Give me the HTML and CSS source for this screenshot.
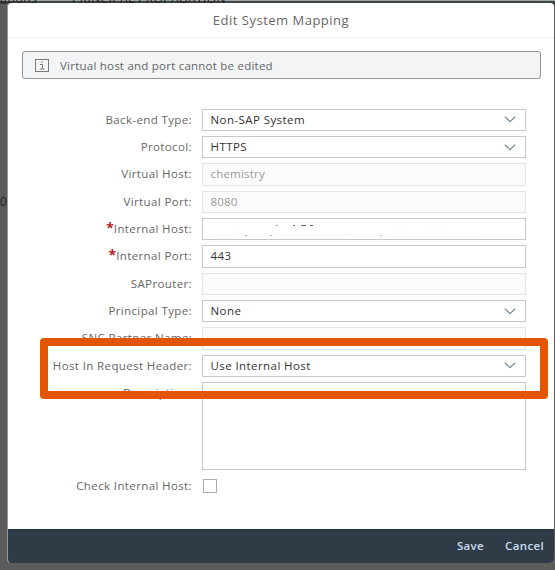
FILE: index.html
```html
<!DOCTYPE html>
<html lang="en">
<head>
<meta charset="utf-8">
<title>Edit System Mapping</title>
<link rel="stylesheet" href="styles.css">
</head>
<body>
<div class="page">
  <div class="backdrop"><span class="tab tab-a">ations</span><span class="tab tab-b">PRINCIPAL PROPAGATION</span><span class="cell">0</span></div>
  <main class="dialog">
    <header class="title"><span class="t-title">Edit System Mapping</span></header>
    <section class="content">
      <div class="strip">
        <svg class="info" viewBox="0 0 14 13"><rect x=".5" y=".5" width="13" height="12"/><path d="M5 5.5h2.5v4.5M4.8 10h4.6M7 2.4v1.6"/></svg>
        <span class="t-strip">Virtual host and port cannot be edited</span>
      </div>
      <form class="form">
        <div class="row"><label>Back-end Type:</label><div class="field"><span>Non-SAP System</span><svg class="arrow" viewBox="0 0 12 7"><path d="M.8.8 6 5.6 11.2.8"/></svg></div></div>
        <div class="row"><label>Protocol:</label><div class="field"><span>HTTPS</span><svg class="arrow" viewBox="0 0 12 7"><path d="M.8.8 6 5.6 11.2.8"/></svg></div></div>
        <div class="row"><label>Virtual Host:</label><div class="field off"><span>chemistry</span></div></div>
        <div class="row"><label>Virtual Port:</label><div class="field off"><span>8080</span></div></div>
        <div class="row"><label><b>*</b>Internal Host:</label><div class="field"><svg class="erased" viewBox="0 0 310 20"><path class="dark" d="M82 6.5h2M90 6.5h5M99 6.5h3"/><path d="M65 6.5h2M34 16.5h2M59 16.5h2M169 16.5h1.5"/><path class="faint" d="M5 16.5h20M65 16.5h75M25 5.5h2M181 7h12M216 7h16M174 17.5h95"/></svg></div></div>
        <div class="row"><label><b>*</b>Internal Port:</label><div class="field"><span>443</span></div></div>
        <div class="row"><label>SAProuter:</label><div class="field off"></div></div>
        <div class="row"><label>Principal Type:</label><div class="field"><span>None</span><svg class="arrow" viewBox="0 0 12 7"><path d="M.8.8 6 5.6 11.2.8"/></svg></div></div>
        <div class="row"><label>SNC Partner Name:</label><div class="field off"></div></div>
        <div class="row"><label>Host In Request Header:</label><div class="field"><span>Use Internal Host</span><svg class="arrow" viewBox="0 0 12 7"><path d="M.8.8 6 5.6 11.2.8"/></svg></div></div>
        <div class="row tall"><label>Description:</label><div class="field"></div></div>
        <div class="row"><label>Check Internal Host:</label><div class="check"></div></div>
      </form>
    </section>
    <footer class="footer"><span>Save</span><span>Cancel</span></footer>
  </main>
  <div class="highlight"></div>
</div>
</body>
</html>
```

FILE: styles.css
```css
* { box-sizing: border-box; }
body { margin: 0; font-family: "Open Sans", "Noto Sans", sans-serif; }
.page { position: relative; width: 555px; height: 570px; overflow: hidden; padding: 3px 1px 0 7px; background: #5c5c5c; }
.backdrop { position: absolute; inset: 0; font-size: 12px; line-height: 14px; color: #1c1c1c; border-top: 1px solid #a3a5a5; background: linear-gradient(#3c4646 0 3px, transparent 3px); }
.tab { position: absolute; top: -9px; white-space: nowrap; }
.tab-a { left: 0; letter-spacing: .5px; }
.tab-b { left: 72px; letter-spacing: .4px; }
.cell { position: absolute; left: 0; top: 194px; }
.dialog { position: relative; display: flex; flex-direction: column; height: 560px; border-left: 1px solid #999; border-radius: 4px; background: #fff; overflow: hidden; }
.title { height: 35px; flex: none; border-bottom: 1px solid #eee; text-align: center; font-size: 13px; line-height: 34px; color: #666; }
.t-title { letter-spacing: .5px; }
.content { flex: 1; padding: 13px 13px 0 14px; }
.strip { display: flex; align-items: center; height: 28px; padding-left: 12px; gap: 11px; border: 1px solid #8c9296; border-radius: 3px; background: #f2f4f6; font-size: 11.5px; color: #666; }
.t-strip { letter-spacing: .23px; }
.info { width: 14px; height: 13px; fill: none; stroke: #74797d; }
.form { padding-top: 29.5px; }
.row { display: grid; grid-template-columns: 170px 324px; column-gap: 10px; height: 27.35px; font-size: 11.5px; line-height: 22px; color: #666; letter-spacing: .38px; }
label { text-align: right; white-space: nowrap; }
label b { color: #b22; font-size: 14px; line-height: 10px; letter-spacing: 0; }
.field { display: flex; align-items: center; justify-content: space-between; height: 22.5px; padding: 0 9px 0 7.5px; border: 1px solid #c8c8c8; background: #fff; color: #333; }
.field span { letter-spacing: .42px; }
.off { border-color: #e4e4e4; background: #fbfbfb; }
.off span { color: #999; letter-spacing: .2px; }
.arrow { width: 12px; height: 7px; fill: none; stroke: #7c8994; stroke-width: 1.2; }
.erased { flex: none; width: 310px; height: 20px; stroke: #aaa; stroke-width: 1; fill: none; }
.erased .dark { stroke: #666; }
.erased .faint { stroke: #f7f7f7; }
.tall { height: 93px; }
.tall .field { height: 88px; }
.check { width: 14px; height: 14px; margin: 4px 0 0 1px; border: 1px solid #aaa; }
.footer { flex: none; height: 34px; display: flex; justify-content: flex-end; align-items: center; gap: 21px; padding-right: 10px; border-top: 1px solid #202e3a; background: #2f3c48; color: #cbdcee; font-size: 11.5px; font-weight: 600; letter-spacing: .35px; }
.footer span { margin-top: -2px; }
.highlight { position: absolute; left: 39.5px; top: 338px; width: 508px; height: 61px; border: 8px solid #e35500; border-radius: 4px; }
```
